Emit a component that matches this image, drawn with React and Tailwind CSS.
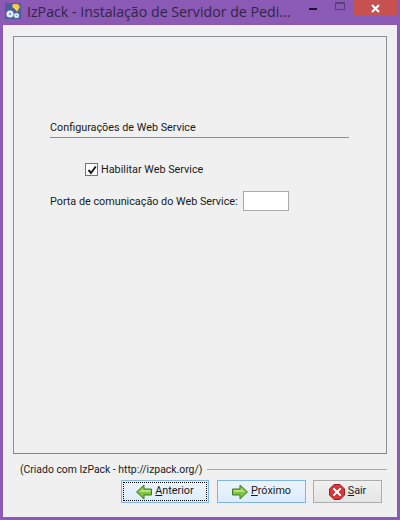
import React from 'react'

const bodyFont = "font-['Roboto','Liberation_Sans',sans-serif]"

function AppIcon() {
  return (
    <svg width="16" height="16" viewBox="0 0 16 16" className="shrink-0">
      <rect x="0" y="0" width="16" height="16" fill="#4a5f9e" />
      <path d="M8 1l5 0 2 3-3 5-2-3-3-2z" fill="#f4c542" />
      <path d="M8 1l2 3 2 1-1 2" fill="#fbe08a" />
      <circle cx="5" cy="11" r="3.6" fill="#e6effa" />
      <circle cx="5" cy="11" r="1.2" fill="#7f9ccf" />
      <circle cx="11.5" cy="12.5" r="2.6" fill="#dce8f7" />
      <circle cx="11.5" cy="12.5" r="0.8" fill="#7f9ccf" />
    </svg>
  )
}

function ArrowLeft() {
  return (
    <svg width="16" height="16" viewBox="0 0 16 16" className="shrink-0">
      <path d="M0.5 8L8 1v4h7.5v6H8v4z" fill="#7fc241" stroke="#3f7d1c" strokeWidth="1" />
      <path d="M3 8l4-3.6V6h7.5v2z" fill="#b6e27c" />
    </svg>
  )
}

function ArrowRight() {
  return (
    <svg width="16" height="16" viewBox="0 0 16 16" className="shrink-0">
      <path d="M15.5 8L8 1v4H0.5v6H8v4z" fill="#7fc241" stroke="#3f7d1c" strokeWidth="1" />
      <path d="M2 6h7V4l4 4H2z" fill="#b6e27c" />
    </svg>
  )
}

function CloseIcon() {
  return (
    <svg width="16" height="16" viewBox="0 0 16 16" className="shrink-0">
      <path d="M5 0.5h6L15.5 5v6L11 15.5H5L0.5 11V5z" fill="#d9363a" stroke="#9c1f22" strokeWidth="1" />
      <path d="M5 4l3 3 3-3 1 1-3 3 3 3-1 1-3-3-3 3-1-1 3-3-3-3z" fill="#ffffff" stroke="#ffffff" strokeWidth="0.8" />
    </svg>
  )
}

export default function App() {
  return (
    <div className={`w-[400px] h-[520px] bg-[#8a5ab5] flex flex-col overflow-hidden text-[10.8px] text-[#1a1a1a] ${bodyFont}`}>
      {/* title bar */}
      <div className="h-[25px] flex items-start shrink-0">
        <div className="ml-[5px] mt-[3px]">
          <AppIcon />
        </div>
        <span className="ml-[6px] text-[14.2px] leading-[21px] mt-px text-[#33244a] font-['Open_Sans',sans-serif] w-[278px] whitespace-nowrap">
          IzPack - Instalação de Servidor de Pedi...
        </span>
        <div className="w-[8px] h-[2px] bg-[#1c1230] mt-[8px] ml-[4px]" />
        <div className="w-[10px] h-[8px] border border-[#5a4080] border-t-2 mt-[2px] ml-[18px]" />
        <div className="w-[45px] h-[16px] bg-[#c75050] ml-[8px] flex items-center justify-center">
          <svg width="9" height="9" viewBox="0 0 9 9">
            <path d="M1 1l7 7M8 1l-7 7" stroke="#ffffff" strokeWidth="2" />
          </svg>
        </div>
      </div>

      {/* client */}
      <div className="flex-1 mx-[3px] mb-[3px] bg-[#f0f0f0] px-[10px] pt-[11px] flex flex-col">
        <div className="h-[418px] border border-[#8a8f94] border-b-[#85858a] pl-[36px] pr-[37px] pt-[81px]">
          <div className="border-b border-[#8c8c8c] h-[20px] leading-[20px] whitespace-nowrap">Configurações de Web Service</div>
          <div className="flex items-center ml-[35px] mt-[25px] h-[13px]">
            <div className="w-[13px] h-[13px] border border-[#3f7fc4] bg-white flex items-center justify-center">
              <svg width="10" height="10" viewBox="0 0 10 10">
                <path d="M1.5 5l2.5 3L8.8 1.5" fill="none" stroke="#1a1a1a" strokeWidth="2" />
              </svg>
            </div>
            <span className="ml-[3px] pt-[2px]">Habilitar Web Service</span>
          </div>
          <div className="flex items-center mt-[15px] h-[20px]">
            <span className="whitespace-nowrap pt-[2px]">Porta de comunicação do Web Service:</span>
            <div className="w-[46px] h-[20px] bg-white border border-[#ababab] ml-[5px]" />
          </div>
        </div>

        <div className="flex items-center mt-[9px] h-[14px] pl-[7px]">
          <span className="whitespace-nowrap text-[10.4px]">(Criado com IzPack - http://izpack.org/)</span>
          <div className="flex-1 h-px bg-[#a8a8a8] ml-[5px] mb-[2px]" />
        </div>

        <div className="flex mt-[3px] ml-[108px]">
          <button className="w-[88px] h-[23px] border border-[#7eb4ea] bg-gradient-to-b from-[#ecf4fc] to-[#dcecfc] flex items-center justify-center p-[1px]">
            <span className="w-full h-full border border-dotted border-black flex items-center justify-center gap-[3px]">
              <ArrowLeft />
              <span><span className="underline">A</span>nterior</span>
            </span>
          </button>
          <button className="w-[89px] h-[23px] ml-[8px] border border-[#7eb4ea] bg-gradient-to-b from-[#ecf4fc] to-[#dcecfc] flex items-center justify-center gap-[3px]">
            <ArrowRight />
            <span><span className="underline">P</span>róximo</span>
          </button>
          <button className="w-[69px] h-[23px] ml-[7px] border border-[#acacac] bg-gradient-to-b from-[#f0f0f0] to-[#e5e5e5] flex items-center justify-center gap-[3px]">
            <CloseIcon />
            <span><span className="underline">S</span>air</span>
          </button>
        </div>
      </div>
    </div>
  )
}
